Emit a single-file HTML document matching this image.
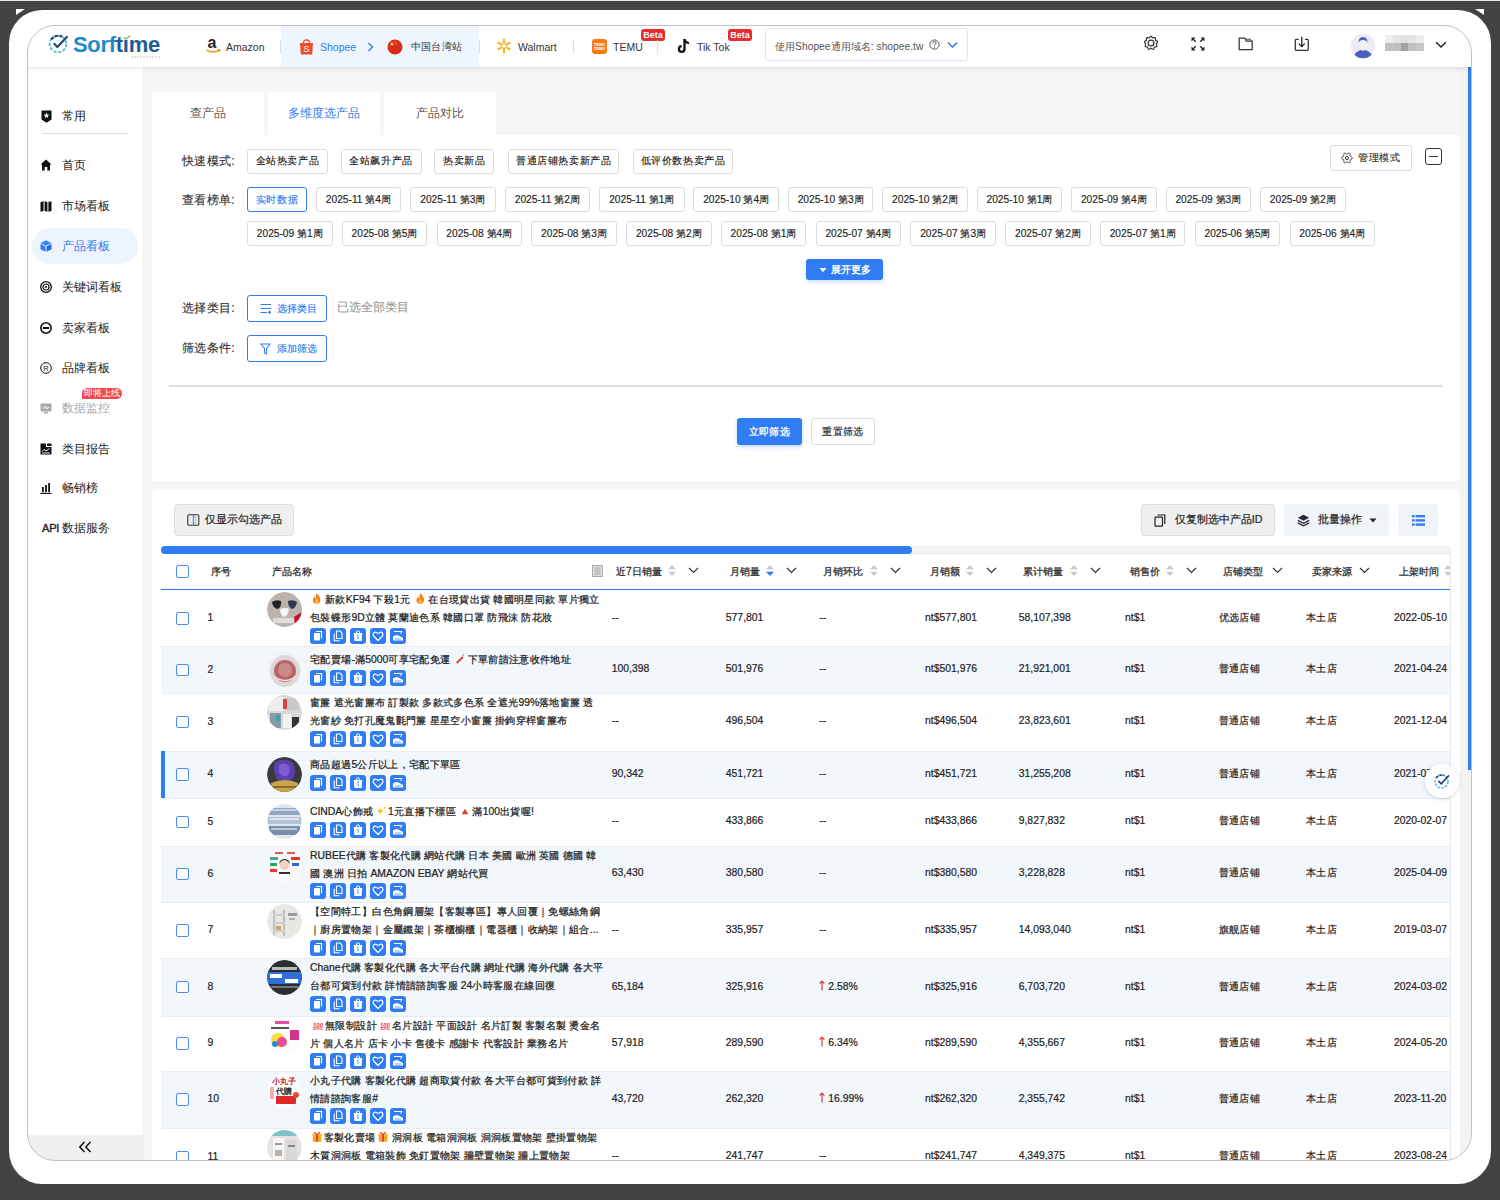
<!DOCTYPE html>
<html><head><meta charset="utf-8">
<style>
*{box-sizing:border-box;margin:0;padding:0}
html,body{width:1500px;height:1200px;overflow:hidden;background:#434343;font-family:"Liberation Sans",sans-serif;color:#333}
.abs{position:absolute}
#topline{position:absolute;left:0;top:0;width:1500px;height:1px;background:#e6e6e6}
#outer{position:absolute;left:9px;top:10px;width:1482px;height:1174px;background:#fff;border-radius:33px}
.tri{position:absolute;width:0;height:0}
#clip{position:absolute;left:0;top:0;width:1500px;height:1200px;clip-path:inset(25px 28px 39px 27px round 28px);background:#f6f6f6}
#frameborder{position:absolute;left:27px;top:25px;width:1445px;height:1136px;border:1px solid #c2c2c2;border-radius:28px;pointer-events:none}
/* header */
#header{position:absolute;left:27px;top:25px;width:1445px;height:42px;background:#fff;z-index:0}
#hshadow{position:absolute;left:27px;top:67px;width:1445px;height:6px;background:linear-gradient(rgba(0,0,0,.09),rgba(0,0,0,.035) 35%,rgba(0,0,0,0));z-index:5}
.nav{position:absolute;top:26px;height:42px;display:flex;align-items:center;font-size:10.5px;color:#333}
.sep{position:absolute;top:40px;width:1px;height:13px;background:#ddd}
.beta{position:absolute;top:29px;width:24px;height:12px;background:#e52b2b;color:#fff;font-size:9px;font-weight:bold;border-radius:3px;text-align:center;line-height:12px}
/* sidebar */
#sidebar{position:absolute;left:27px;top:67px;width:116px;height:1094px;background:#fff;box-shadow:1px 0 0 #f1f1f1}
.sitem{position:absolute;left:40px;height:20px;display:flex;align-items:center;font-size:12px;color:#222}
.sitem .ic{width:12px;height:12px;margin-right:10px;display:flex;align-items:center;justify-content:center}
.sitem span{white-space:nowrap}
/* panels */
.panel{position:absolute;background:#fff}
.tab{position:absolute;top:92px;width:112px;height:43px;background:#fff;border-radius:4px 4px 0 0;font-size:12px;color:#555;text-align:center;line-height:43px}
.lbl{position:absolute;-webkit-text-stroke:0.15px currentColor;font-size:12px;letter-spacing:0.3px;color:#333;white-space:nowrap}
.chip{position:absolute;-webkit-text-stroke:0.15px currentColor;height:25px;border:1px solid #dcdcdc;border-radius:3px;background:#fff;font-size:10.4px;letter-spacing:0.6px;color:#222;display:flex;align-items:center;justify-content:center;white-space:nowrap}
.tbtn{position:absolute;-webkit-text-stroke:0.2px currentColor;border-radius:4px;display:flex;align-items:center;justify-content:center;font-size:10.7px;color:#222;white-space:nowrap}
.cb{position:absolute;width:12.5px;height:12.5px;border:1.3px solid #4b8cf5;border-radius:2px;background:#fff}
.th{position:absolute;top:564px;font-size:10.3px;font-weight:normal;-webkit-text-stroke:0.3px #333;color:#333;white-space:nowrap;line-height:16px}
.td{position:absolute;-webkit-text-stroke:0.2px #222;font-size:10.4px;color:#222;white-space:nowrap;line-height:18px}
.pimg{position:absolute;width:35px;height:35px;border-radius:50%;overflow:hidden}
.pimg svg{display:block}
.pname{position:absolute;-webkit-text-stroke:0.25px #222;font-size:11px;line-height:18.6px;transform:scale(0.942);transform-origin:0 0;color:#222;white-space:nowrap}
.em{display:inline-block;vertical-align:-1px;margin-right:2px}
.icons{position:absolute;display:flex;gap:4px;height:16px}
.icons svg{display:block}
</style></head><body>
<div id="topline"></div>
<div id="outer"></div>
<div class="tri" style="left:16px;top:9px;border-top:6px solid #fff;border-right:9px solid transparent"></div>
<div class="tri" style="left:1475px;top:9px;border-top:6px solid #fff;border-left:9px solid transparent"></div>

<div id="clip">
 <div id="header"></div>
 <!-- logo -->
 <svg class="abs" style="left:48px;top:33px" width="22" height="21" viewBox="0 0 22 21">
  <circle cx="10" cy="11" r="8.3" fill="none" stroke="#5bbde0" stroke-width="2" stroke-dasharray="3.2 1.6"/>
  <path d="M3.2 6.5 A8.3 8.3 0 0 1 14 3.7" fill="none" stroke="#23456f" stroke-width="2.2" stroke-dasharray="3.2 1.6"/>
  <path d="M5.8 10.2 L9.4 14 L19.5 3.2" fill="none" stroke="#23456f" stroke-width="2.1" stroke-linejoin="miter"/>
 </svg>
 <div class="abs" style="left:73px;top:31px;font-size:22px;font-weight:bold;letter-spacing:-0.3px;line-height:28px;white-space:nowrap"><span style="color:#1f8ac6">Sorf</span><span style="color:#1e5d93">tıme</span></div>
 <svg class="abs" style="left:123px;top:35px" width="8" height="5" viewBox="0 0 8 5"><path d="M1 2.5 L3 4 L7 0.8" fill="none" stroke="#6cc04a" stroke-width="1.2"/></svg>
 <div class="abs" style="left:131px;top:56px;width:30px;height:1.5px;background:repeating-linear-gradient(90deg,#bbb 0 2px,transparent 2px 3px);opacity:.45"></div>
 <!-- shopee highlight -->
 <div class="abs" style="left:281px;top:26px;width:198px;height:41px;background:#eef5fe"></div>
 <!-- amazon -->
 <svg class="abs" style="left:205px;top:37px" width="17" height="17" viewBox="0 0 17 17">
  <text x="2.5" y="11" font-family="Liberation Sans" font-weight="bold" font-size="16" fill="#222">a</text>
  <path d="M1.5 13 Q8 17 14.5 13" fill="none" stroke="#f29a1e" stroke-width="1.5"/>
  <path d="M12.5 12.3 L15 12.7 L14.2 15" fill="none" stroke="#f29a1e" stroke-width="1.2"/>
 </svg>
 <div class="nav" style="left:226px">Amazon</div>
 <div class="sep" style="left:280px"></div>
 <svg class="abs" style="left:299px;top:39px" width="15" height="16" viewBox="0 0 15 16">
  <path d="M4.5 4 Q4.5 0.8 7.5 0.8 Q10.5 0.8 10.5 4" fill="none" stroke="#ee4d2d" stroke-width="1.3"/>
  <path d="M1 4 H14 L13.2 15.5 H1.8 Z" fill="#ee4d2d"/>
  <text x="7.5" y="13" text-anchor="middle" font-family="Liberation Sans" font-size="9" fill="#fff">S</text>
 </svg>
 <div class="nav" style="left:320px;color:#2f7cf3">Shopee</div>
 <svg class="abs" style="left:367px;top:42px" width="7" height="10" viewBox="0 0 7 10"><path d="M1.5 1 L5.5 5 L1.5 9" fill="none" stroke="#2f7cf3" stroke-width="1.4"/></svg>
 <svg class="abs" style="left:387px;top:39px" width="16" height="16" viewBox="0 0 16 16"><circle cx="8" cy="8" r="7.5" fill="#dc2b1b"/><circle cx="5" cy="5" r="1.5" fill="#ffd83a"/><circle cx="8" cy="3" r=".5" fill="#ffd83a"/><circle cx="9" cy="5" r=".5" fill="#ffd83a"/></svg>
 <div class="nav" style="left:411px;font-size:10.2px;letter-spacing:0.2px">中国台湾站</div>
 <div class="sep" style="left:479px"></div>
 <svg class="abs" style="left:496px;top:38px" width="16" height="16" viewBox="0 0 16 16"><g stroke="#f5b21a" stroke-width="2" stroke-linecap="round"><path d="M8 1.5 V5.5"/><path d="M8 10.5 V14.5"/><path d="M2.4 4.8 L5.8 6.7"/><path d="M10.2 9.3 L13.6 11.2"/><path d="M2.4 11.2 L5.8 9.3"/><path d="M10.2 6.7 L13.6 4.8"/></g></svg>
 <div class="nav" style="left:518px">Walmart</div>
 <div class="sep" style="left:573px"></div>
 <div class="abs" style="left:592px;top:39px;width:15px;height:15px;background:#f77b13;border-radius:3px;color:#fff;font-size:4px;line-height:4px;text-align:center;padding-top:4px;font-weight:bold">TEMU<br>TEMU</div>
 <div class="nav" style="left:613px;font-size:10.5px">TEMU</div>
 <div class="beta" style="left:641px">Beta</div>
 <div class="sep" style="left:657px"></div>
 <svg class="abs" style="left:676px;top:38px" width="16" height="16" viewBox="0 0 16 16"><path d="M8.5 1 V11 A2.8 2.8 0 1 1 5.7 8.2" fill="none" stroke="#111" stroke-width="2.3"/><path d="M8.5 1.5 Q9.5 5 13 5" fill="none" stroke="#111" stroke-width="2.2"/></svg>
 <div class="nav" style="left:697px;font-size:10.5px">Tik Tok</div>
 <div class="beta" style="left:728px">Beta</div>
 <!-- domain box -->
 <div class="abs" style="left:765px;top:28px;width:203px;height:33px;border:1px solid #dbe7fb;border-radius:3px;background:#fff"></div>
 <div class="nav" style="left:775px;font-size:10.2px;color:#555;letter-spacing:0.05px">使用Shopee通用域名: shopee.tw</div>
 <svg class="abs" style="left:929px;top:39px" width="11" height="11" viewBox="0 0 11 11"><circle cx="5.5" cy="5.5" r="4.6" fill="none" stroke="#555" stroke-width="1"/><path d="M3.8 4.3 Q3.8 2.6 5.5 2.6 Q7.2 2.6 7.2 4.1 Q7.2 5 5.5 5.8 V6.6" fill="none" stroke="#555" stroke-width="1"/><circle cx="5.5" cy="8.2" r=".6" fill="#555"/></svg>
 <svg class="abs" style="left:947px;top:41px" width="11" height="8" viewBox="0 0 11 8"><path d="M1 1.5 L5.5 6 L10 1.5" fill="none" stroke="#2f7cf3" stroke-width="1.5"/></svg>
 <!-- right icons -->
 <svg class="abs" style="left:1143px;top:35px" width="16" height="16" viewBox="0 0 16 16"><path d="M14.00 8.00 L13.70 8.30 L13.44 8.57 L13.29 8.84 L13.26 9.12 L13.35 9.43 L13.52 9.79 L13.70 10.19 L13.83 10.60 L13.86 10.99 L13.76 11.32 L13.52 11.58 L13.16 11.75 L12.74 11.84 L12.31 11.88 L11.92 11.92 L11.60 12.00 L11.37 12.16 L11.22 12.43 L11.11 12.78 L11.00 13.20 L10.86 13.61 L10.65 13.96 L10.38 14.20 L10.05 14.29 L9.67 14.24 L9.29 14.07 L8.92 13.83 L8.59 13.59 L8.28 13.41 L8.00 13.35 L7.72 13.41 L7.41 13.59 L7.08 13.83 L6.71 14.07 L6.33 14.24 L5.95 14.29 L5.62 14.20 L5.35 13.96 L5.14 13.61 L5.00 13.20 L4.89 12.78 L4.78 12.43 L4.63 12.16 L4.40 12.00 L4.08 11.92 L3.69 11.88 L3.26 11.84 L2.84 11.75 L2.48 11.58 L2.24 11.32 L2.14 10.99 L2.17 10.60 L2.30 10.19 L2.48 9.79 L2.65 9.43 L2.74 9.12 L2.71 8.84 L2.56 8.57 L2.30 8.30 L2.00 8.00 L1.71 7.67 L1.51 7.32 L1.44 6.96 L1.53 6.62 L1.76 6.33 L2.10 6.08 L2.49 5.89 L2.87 5.71 L3.17 5.54 L3.37 5.33 L3.45 5.05 L3.45 4.70 L3.42 4.29 L3.39 3.85 L3.43 3.43 L3.57 3.08 L3.82 2.84 L4.16 2.72 L4.57 2.72 L5.00 2.80 L5.41 2.92 L5.77 3.00 L6.08 3.00 L6.34 2.88 L6.57 2.65 L6.79 2.33 L7.05 1.97 L7.33 1.65 L7.66 1.43 L8.00 1.35 L8.34 1.43 L8.67 1.65 L8.95 1.97 L9.21 2.33 L9.43 2.65 L9.66 2.88 L9.92 3.00 L10.23 3.00 L10.59 2.92 L11.00 2.80 L11.43 2.72 L11.84 2.72 L12.18 2.84 L12.43 3.08 L12.57 3.43 L12.61 3.85 L12.58 4.29 L12.55 4.70 L12.55 5.05 L12.63 5.33 L12.83 5.54 L13.13 5.71 L13.51 5.89 L13.90 6.08 L14.24 6.33 L14.47 6.62 L14.56 6.96 L14.49 7.32 L14.29 7.67Z" fill="none" stroke="#333" stroke-width="1.2"/><circle cx="8" cy="8" r="2.9" fill="none" stroke="#333" stroke-width="1.2"/></svg>
 <svg class="abs" style="left:1191px;top:37px" width="14" height="14" viewBox="0 0 14 14"><g fill="#222"><path d="M0.5 0.5 H4.5 L0.5 4.5Z"/><path d="M13.5 0.5 H9.5 L13.5 4.5Z"/><path d="M0.5 13.5 H4.5 L0.5 9.5Z"/><path d="M13.5 13.5 H9.5 L13.5 9.5Z"/></g><g stroke="#222" stroke-width="1.3"><path d="M1.5 1.5 L4.8 4.8"/><path d="M12.5 1.5 L9.2 4.8"/><path d="M1.5 12.5 L4.8 9.2"/><path d="M12.5 12.5 L9.2 9.2"/></g></svg>
 <svg class="abs" style="left:1238px;top:37px" width="16" height="14" viewBox="0 0 16 14"><path d="M1.2 1 H6.8 L8.2 4 H14.2 V12.6 H1.2 Z" fill="none" stroke="#333" stroke-width="1.25" stroke-linejoin="round"/><path d="M7.8 2.2 H12.4 L13.3 4" fill="none" stroke="#444" stroke-width="1"/></svg>
 <svg class="abs" style="left:1294px;top:36px" width="16" height="16" viewBox="0 0 16 16"><path d="M4.6 3.3 H2.3 Q1.3 3.3 1.3 4.3 V13.3 Q1.3 14.3 2.3 14.3 H13.3 Q14.3 14.3 14.3 13.3 V4.3 Q14.3 3.3 13.3 3.3 H11" fill="none" stroke="#333" stroke-width="1.3"/><path d="M7.8 0.8 V10.6 M4.8 7.6 L7.8 10.6 L10.8 7.6" fill="none" stroke="#222" stroke-width="1.3"/></svg>
 <svg class="abs" style="left:1350px;top:33px" width="26" height="26" viewBox="0 0 26 26"><defs><clipPath id="av"><circle cx="13" cy="13" r="12.2"/></clipPath></defs><circle cx="13" cy="13" r="12.2" fill="#ebecf4"/><g clip-path="url(#av)"><path d="M13 16.5 Q5 17.5 3 25 L3 27 H23 V25 Q21 17.5 13 16.5Z" fill="#4a5fbf"/><path d="M10.3 12 V16.8 Q13 18.5 15.7 16.8 V12 Z" fill="#f3eeee"/><ellipse cx="13" cy="10" rx="4" ry="5" fill="#f5efef"/><path d="M8.7 10 Q8.2 4 13 4 Q17.8 4 17.3 10 Q16.8 7 13 7 Q9.2 7 8.7 10Z" fill="#4a5fbf"/></g></svg>
 <div class="abs" style="left:1385px;top:35px;width:39px;height:16px;display:grid;grid-template-columns:repeat(5,1fr);grid-template-rows:1fr 1fr">
  <i style="background:#efefef"></i><i style="background:#e4e4e4"></i><i style="background:#e2e2e2"></i><i style="background:#e4e4e4"></i><i style="background:#ececec"></i>
  <i style="background:#c2c2c2"></i><i style="background:#c0c0c0"></i><i style="background:#a2a2a2"></i><i style="background:#c0c0c0"></i><i style="background:#c6c6c6"></i>
 </div>
 <svg class="abs" style="left:1435px;top:41px" width="12" height="8" viewBox="0 0 12 8"><path d="M1.2 1.2 L6 6 L10.8 1.2" fill="none" stroke="#222" stroke-width="1.5"/></svg>
 <div class="abs" style="left:1468px;top:67px;width:3px;height:703px;background:#2f7cf3"></div>
 <div id="hshadow"></div>
 <div id="sidebar"></div>
 <div class="abs" style="left:32px;top:228px;width:106px;height:36px;border-radius:18px;background:#edf4fe"></div>
 <div class="abs" style="left:42px;top:133px;width:86px;height:1px;background:#dedede"></div>
 <div class="sitem" style="top:106px"><div class="ic"><svg width="11" height="13" viewBox="0 0 11 13"><path d="M0.5 0.5 H10.5 V9.5 L5.5 12.8 L0.5 9.5 Z" fill="#111"/><path d="M5.5 2.6 L6.3 4.6 L8.4 4.7 L6.8 6 L7.3 8.1 L5.5 7 L3.7 8.1 L4.2 6 L2.6 4.7 L4.7 4.6 Z" fill="#fff"/></svg></div><span>常用</span></div>
 <div class="sitem" style="top:155px"><div class="ic"><svg width="12" height="12" viewBox="0 0 12 12"><path d="M6 0.5 L11.5 5.5 H10 V11.5 H7.3 V8 H4.7 V11.5 H2 V5.5 H0.5 Z" fill="#111"/></svg></div><span>首页</span></div>
 <div class="sitem" style="top:196px"><div class="ic"><svg width="12" height="11" viewBox="0 0 12 11"><path d="M0.5 1 L3.6 0.3 V10 L0.5 10.7 Z M4.6 0.3 L7.4 1 V10.7 L4.6 10 Z M8.4 1 L11.5 0.3 V10 L8.4 10.7 Z" fill="#111"/></svg></div><span>市场看板</span></div>
 <div class="sitem" style="top:236px;color:#2f7cf3"><div class="ic"><svg width="12" height="12" viewBox="0 0 12 12"><path d="M6 0.3 L11.4 3 L6 5.7 L0.6 3 Z" fill="#3b86f6"/><path d="M0.5 3.8 L5.5 6.4 V11.8 L0.5 9.2 Z" fill="#2f7cf3"/><path d="M11.5 3.8 L6.5 6.4 V11.8 L11.5 9.2 Z" fill="#1f6ce8"/></svg></div><span>产品看板</span></div>
 <div class="sitem" style="top:277px"><div class="ic"><svg width="12" height="12" viewBox="0 0 12 12"><circle cx="6" cy="6" r="5.3" fill="none" stroke="#111" stroke-width="1.3"/><circle cx="6" cy="6" r="3" fill="none" stroke="#111" stroke-width="1.2"/><circle cx="6" cy="6" r="1" fill="#111"/></svg></div><span>关键词看板</span></div>
 <div class="sitem" style="top:318px"><div class="ic"><svg width="12" height="12" viewBox="0 0 12 12"><circle cx="6" cy="6" r="5.2" fill="none" stroke="#111" stroke-width="1.6"/><rect x="2.8" y="5" width="6.4" height="2" fill="#111"/></svg></div><span>卖家看板</span></div>
 <div class="sitem" style="top:358px"><div class="ic"><svg width="12" height="12" viewBox="0 0 12 12"><circle cx="6" cy="6" r="5.3" fill="none" stroke="#111" stroke-width="1"/><text x="6" y="8.6" text-anchor="middle" font-family="Liberation Sans" font-size="7.5" fill="#111">R</text></svg></div><span>品牌看板</span></div>
 <div class="abs" style="left:82px;top:388px;width:40px;height:11px;border-radius:6px 6px 6px 0;background:#f2494f;color:#fff;font-size:8.5px;line-height:11px;text-align:center;white-space:nowrap">即将上线</div>
 <div class="sitem" style="top:398px;color:#aaa"><div class="ic"><svg width="12" height="11" viewBox="0 0 12 11"><rect x="0.5" y="0.5" width="11" height="8" rx="1" fill="#aaa"/><rect x="4" y="9" width="4" height="1.5" fill="#aaa"/><path d="M2.5 5 H4.5 L5.5 3 L6.8 6.2 L7.6 4.6 H9.5" fill="none" stroke="#fff" stroke-width=".8"/></svg></div><span>数据监控</span></div>
 <div class="sitem" style="top:439px"><div class="ic"><svg width="12" height="12" viewBox="0 0 12 12"><path d="M0.5 0.5 H6 V4 H11.5 V11.5 H0.5 Z" fill="#111"/><rect x="7" y="0.5" width="4.5" height="2.5" fill="#111"/><path d="M2 10 H10 M2.2 8.5 L4 6.5 L6 8 L9.5 5.5" fill="none" stroke="#fff" stroke-width=".9"/></svg></div><span>类目报告</span></div>
 <div class="sitem" style="top:478px"><div class="ic"><svg width="12" height="12" viewBox="0 0 12 12"><rect x="2" y="5" width="1.8" height="5" fill="#111"/><rect x="5.1" y="3" width="1.8" height="7" fill="#111"/><rect x="8.2" y="1" width="1.8" height="9" fill="#111"/><rect x="0.5" y="10.8" width="11" height="1.2" fill="#111"/></svg></div><span>畅销榜</span></div>
 <div class="sitem" style="top:518px;left:42px"><span style="font-size:11px;font-weight:normal;-webkit-text-stroke:0.4px #222;margin-right:3px;letter-spacing:-0.2px">API</span><span>数据服务</span></div>
 <div class="abs" style="left:27px;top:1135px;width:116px;height:26px;background:#f0f0f0"></div>
 <svg class="abs" style="left:78px;top:1141px" width="14" height="12" viewBox="0 0 14 12"><path d="M6.5 1 L1.8 6 L6.5 11 M12.5 1 L7.8 6 L12.5 11" fill="none" stroke="#111" stroke-width="1.5"/></svg>
<div class="panel" style="left:152px;top:135px;width:1308px;height:346px;border-radius:0"></div>
<div class="tab" style="left:152px;color:#555">查产品</div>
<div class="tab" style="left:268px;color:#2f7cf3">多维度选产品</div>
<div class="tab" style="left:384px;color:#555">产品对比</div>
<div class="lbl" style="left:182px;top:153px">快速模式:</div>
<div class="chip" style="left:247.0px;top:148.5px;width:81.0px">全站热卖产品</div>
<div class="chip" style="left:340.5px;top:148.5px;width:81.0px">全站飙升产品</div>
<div class="chip" style="left:434.0px;top:148.5px;width:60.3px">热卖新品</div>
<div class="chip" style="left:508.0px;top:148.5px;width:111.3px">普通店铺热卖新产品</div>
<div class="chip" style="left:632.7px;top:148.5px;width:100.8px">低评价数热卖产品</div>
<div class="lbl" style="left:182px;top:192px">查看榜单:</div>
<div class="chip" style="left:247px;top:187.2px;width:60px;border-color:#2f7cf3;color:#2f7cf3">实时数据</div>
<div class="chip" style="left:315.7px;top:187.2px;width:85.5px;font-size:10.2px;letter-spacing:0">2025-11 第4周</div>
<div class="chip" style="left:410.1px;top:187.2px;width:85.5px;font-size:10.2px;letter-spacing:0">2025-11 第3周</div>
<div class="chip" style="left:504.6px;top:187.2px;width:85.5px;font-size:10.2px;letter-spacing:0">2025-11 第2周</div>
<div class="chip" style="left:599.0px;top:187.2px;width:85.5px;font-size:10.2px;letter-spacing:0">2025-11 第1周</div>
<div class="chip" style="left:693.4px;top:187.2px;width:85.5px;font-size:10.2px;letter-spacing:0">2025-10 第4周</div>
<div class="chip" style="left:787.9px;top:187.2px;width:85.5px;font-size:10.2px;letter-spacing:0">2025-10 第3周</div>
<div class="chip" style="left:882.3px;top:187.2px;width:85.5px;font-size:10.2px;letter-spacing:0">2025-10 第2周</div>
<div class="chip" style="left:976.7px;top:187.2px;width:85.5px;font-size:10.2px;letter-spacing:0">2025-10 第1周</div>
<div class="chip" style="left:1071.1px;top:187.2px;width:85.5px;font-size:10.2px;letter-spacing:0">2025-09 第4周</div>
<div class="chip" style="left:1165.6px;top:187.2px;width:85.5px;font-size:10.2px;letter-spacing:0">2025-09 第3周</div>
<div class="chip" style="left:1260.0px;top:187.2px;width:85.5px;font-size:10.2px;letter-spacing:0">2025-09 第2周</div>
<div class="chip" style="left:247.0px;top:221.2px;width:85.5px;font-size:10.2px;letter-spacing:0">2025-09 第1周</div>
<div class="chip" style="left:341.8px;top:221.2px;width:85.5px;font-size:10.2px;letter-spacing:0">2025-08 第5周</div>
<div class="chip" style="left:436.5px;top:221.2px;width:85.5px;font-size:10.2px;letter-spacing:0">2025-08 第4周</div>
<div class="chip" style="left:531.3px;top:221.2px;width:85.5px;font-size:10.2px;letter-spacing:0">2025-08 第3周</div>
<div class="chip" style="left:626.1px;top:221.2px;width:85.5px;font-size:10.2px;letter-spacing:0">2025-08 第2周</div>
<div class="chip" style="left:720.8px;top:221.2px;width:85.5px;font-size:10.2px;letter-spacing:0">2025-08 第1周</div>
<div class="chip" style="left:815.6px;top:221.2px;width:85.5px;font-size:10.2px;letter-spacing:0">2025-07 第4周</div>
<div class="chip" style="left:910.4px;top:221.2px;width:85.5px;font-size:10.2px;letter-spacing:0">2025-07 第3周</div>
<div class="chip" style="left:1005.2px;top:221.2px;width:85.5px;font-size:10.2px;letter-spacing:0">2025-07 第2周</div>
<div class="chip" style="left:1099.9px;top:221.2px;width:85.5px;font-size:10.2px;letter-spacing:0">2025-07 第1周</div>
<div class="chip" style="left:1194.7px;top:221.2px;width:85.5px;font-size:10.2px;letter-spacing:0">2025-06 第5周</div>
<div class="chip" style="left:1289.5px;top:221.2px;width:85.5px;font-size:10.2px;letter-spacing:0">2025-06 第4周</div>
<div class="chip" style="left:1330px;top:144.6px;width:82px;height:26px;color:#333"><svg width="12" height="12" viewBox="0 0 12 12" style="margin-right:5px"><path d="M11.40 6.00 L11.35 6.28 L11.22 6.55 L11.01 6.79 L10.74 7.01 L10.44 7.19 L10.14 7.35 L9.86 7.48 L9.61 7.61 L9.42 7.74 L9.29 7.90 L9.22 8.09 L9.20 8.32 L9.21 8.60 L9.23 8.91 L9.25 9.25 L9.24 9.60 L9.19 9.94 L9.08 10.25 L8.92 10.50 L8.70 10.68 L8.43 10.78 L8.13 10.79 L7.82 10.73 L7.50 10.61 L7.19 10.44 L6.90 10.26 L6.65 10.08 L6.41 9.93 L6.20 9.83 L6.00 9.80 L5.80 9.83 L5.59 9.93 L5.35 10.08 L5.10 10.26 L4.81 10.44 L4.50 10.61 L4.18 10.73 L3.87 10.79 L3.57 10.78 L3.30 10.68 L3.08 10.50 L2.92 10.25 L2.81 9.94 L2.76 9.60 L2.75 9.25 L2.77 8.91 L2.79 8.60 L2.80 8.32 L2.78 8.09 L2.71 7.90 L2.58 7.74 L2.39 7.61 L2.14 7.48 L1.86 7.35 L1.56 7.19 L1.26 7.01 L0.99 6.79 L0.78 6.55 L0.65 6.28 L0.60 6.00 L0.65 5.72 L0.78 5.45 L0.99 5.21 L1.26 4.99 L1.56 4.81 L1.86 4.65 L2.14 4.52 L2.39 4.39 L2.58 4.26 L2.71 4.10 L2.78 3.91 L2.80 3.68 L2.79 3.40 L2.77 3.09 L2.75 2.75 L2.76 2.40 L2.81 2.06 L2.92 1.75 L3.08 1.50 L3.30 1.32 L3.57 1.22 L3.87 1.21 L4.18 1.27 L4.50 1.39 L4.81 1.56 L5.10 1.74 L5.35 1.92 L5.59 2.07 L5.80 2.17 L6.00 2.20 L6.20 2.17 L6.41 2.07 L6.65 1.92 L6.90 1.74 L7.19 1.56 L7.50 1.39 L7.82 1.27 L8.13 1.21 L8.43 1.22 L8.70 1.32 L8.92 1.50 L9.08 1.75 L9.19 2.06 L9.24 2.40 L9.25 2.75 L9.23 3.09 L9.21 3.40 L9.20 3.68 L9.22 3.91 L9.29 4.10 L9.42 4.26 L9.61 4.39 L9.86 4.52 L10.14 4.65 L10.44 4.81 L10.74 4.99 L11.01 5.21 L11.22 5.45 L11.35 5.72Z" fill="none" stroke="#333" stroke-width="1"/><circle cx="6" cy="6" r="1.6" fill="none" stroke="#333" stroke-width="1"/></svg>管理模式</div>
<div class="abs" style="left:1425px;top:148px;width:17px;height:17px;border:1.3px solid #333;border-radius:3px"><div class="abs" style="left:3px;top:6.5px;width:8.5px;height:1.3px;background:#333"></div></div>
<div class="abs" style="left:806px;top:259px;width:77px;height:21px;background:#2f7cf3;border-radius:3px;box-shadow:0 2px 4px rgba(47,124,243,.25);color:#fff;font-size:10px;font-weight:bold;display:flex;align-items:center;justify-content:center"><svg width="8" height="6" viewBox="0 0 8 6" style="margin-right:4px"><path d="M0.5 1 H7.5 L4 5.2 Z" fill="#fff"/></svg>展开更多</div>
<div class="lbl" style="left:182px;top:299.5px">选择类目:</div>
<div class="chip" style="left:247px;top:295px;width:80px;height:27px;border-color:#2f7cf3;color:#2f7cf3;font-size:10.4px;letter-spacing:0;padding-left:2px"><svg width="12" height="11" viewBox="0 0 12 11" style="margin-right:5px"><path d="M0.5 1.5 H11 M0.5 5.5 H11 M0.5 9.5 H7" fill="none" stroke="#2f7cf3" stroke-width="1.1"/><path d="M9.5 7.5 V11 M7.8 9.3 H11.2" fill="none" stroke="#2f7cf3" stroke-width="1.1"/></svg>选择类目</div>
<div class="lbl" style="left:336.5px;top:300px;color:#999;font-size:11.5px;letter-spacing:0">已选全部类目</div>
<div class="lbl" style="left:182px;top:340px">筛选条件:</div>
<div class="chip" style="left:247px;top:335px;width:80px;height:27px;border-color:#2f7cf3;color:#2f7cf3;font-size:10.4px;letter-spacing:0;padding-left:2px"><svg width="11" height="12" viewBox="0 0 11 12" style="margin-right:6px"><path d="M0.8 1 H10.2 L6.5 5.5 V11 L4.5 9.8 V5.5 Z" fill="none" stroke="#2f7cf3" stroke-width="1.1" stroke-linejoin="round"/></svg>添加筛选</div>
<div class="abs" style="left:169px;top:385px;width:1274px;height:1.5px;background:#dedede"></div>
<div class="abs" style="left:737px;top:418px;width:65px;height:27px;background:#2f7cf3;border-radius:3px;box-shadow:0 2px 4px rgba(47,124,243,.3);color:#fff;font-size:10.4px;letter-spacing:0.3px;-webkit-text-stroke:0.3px #fff;display:flex;align-items:center;justify-content:center">立即筛选</div>
<div class="chip" style="left:811px;top:418px;width:64px;height:27px;font-size:10.4px;letter-spacing:0.3px;color:#222">重置筛选</div>
<div class="panel" style="left:152px;top:489px;width:1308px;height:700px;border-radius:6px 6px 0 0"></div>
<div class="tbtn" style="left:174px;top:504px;width:120px;height:32px;background:#efefef;border:1px solid #dcdcdc"><svg width="13" height="12" viewBox="0 0 13 12" style="margin-right:5px"><rect x="0.8" y="0.8" width="11" height="10.4" rx="1" fill="none" stroke="#333" stroke-width="1.1"/><path d="M6.3 0.5 V11.5" stroke="#2f7cf3" stroke-width="1"/><path d="M8 3 H10 M8 6 H10 M8 9 H10" stroke="#333" stroke-width=".8" stroke-dasharray="1 1"/></svg>仅显示勾选产品</div>
<div class="tbtn" style="left:1141px;top:504px;width:134px;height:32px;background:#efefef;border:1px solid #dcdcdc"><svg width="12" height="13" viewBox="0 0 12 13" style="margin-right:9px"><path d="M3.5 1 H10.8 V10" fill="none" stroke="#222" stroke-width="1.2"/><rect x="1" y="3.2" width="7.5" height="9" rx=".8" fill="none" stroke="#222" stroke-width="1.2"/></svg>仅复制选中产品ID</div>
<div class="tbtn" style="left:1284px;top:504px;width:105px;height:32px;background:#f0f3f7"><svg width="13" height="13" viewBox="0 0 13 13" style="margin-right:8px"><path d="M6.5 0.8 L12.2 3.8 L6.5 6.8 L0.8 3.8Z" fill="#1f2d3d"/><path d="M0.8 6.3 L6.5 9.3 L12.2 6.3" fill="none" stroke="#1f2d3d" stroke-width="1.3"/><path d="M0.8 8.8 L6.5 11.8 L12.2 8.8" fill="none" stroke="#1f2d3d" stroke-width="1.3"/></svg>批量操作<svg width="8" height="5" viewBox="0 0 8 5" style="margin-left:7px"><path d="M0.5 0.5 H7.5 L4 4.5Z" fill="#222"/></svg></div>
<div class="tbtn" style="left:1398px;top:504px;width:40px;height:32px;background:#f0f3f7"><svg width="13" height="11" viewBox="0 0 13 11"><g fill="#2f7cf3"><rect x="0" y="0" width="2.6" height="2.4"/><rect x="3.6" y="0" width="9.4" height="2.4"/><rect x="0" y="4.2" width="2.6" height="2.4"/><rect x="3.6" y="4.2" width="9.4" height="2.4"/><rect x="0" y="8.4" width="2.6" height="2.4"/><rect x="3.6" y="8.4" width="9.4" height="2.4"/></g></svg></div>
<div class="abs" style="left:161px;top:545.5px;width:1290px;height:8px;background:#f3f3f3;border-bottom:1px solid #e2e5e9"></div>
<div class="abs" style="left:161px;top:545.5px;width:751px;height:8px;background:#2f7cf3;border-radius:4px"></div>
<div class="abs" style="left:160.5px;top:553.5px;width:1px;height:640px;background:#e3e6ea"></div>
<div class="abs" style="left:161px;top:553.5px;width:1290px;height:35px;background:#fff"></div>
<div class="cb" style="left:176px;top:565px"></div>
<div class="th" style="left:211px">序号</div>
<div class="th" style="left:271.5px">产品名称</div>
<svg class="abs" style="left:592px;top:565px" width="11" height="12" viewBox="0 0 11 12"><rect x=".5" y=".5" width="10" height="11" fill="#ddd" stroke="#aaa"/><path d="M2.5 3 H8.5 M2.5 5 H8.5 M2.5 7 H8.5 M2.5 9 H8.5" stroke="#999" stroke-width=".8"/></svg>
<div class="th" style="left:616px">近7日销量</div>
<svg class="abs" style="left:667.0px;top:564px" width="10" height="13" viewBox="0 0 10 13"><path d="M5 1 L9 5.2 H1Z" fill="#c4c9d2"/><path d="M5 12 L9 7.8 H1Z" fill="#c4c9d2"/></svg>
<svg class="abs" style="left:688.0px;top:567px" width="11" height="7" viewBox="0 0 11 7"><path d="M1 1 L5.5 5.5 L10 1" fill="none" stroke="#333" stroke-width="1.2"/></svg>
<div class="th" style="left:730px">月销量</div>
<svg class="abs" style="left:765.3px;top:564px" width="10" height="13" viewBox="0 0 10 13"><path d="M5 1 L9 5.2 H1Z" fill="#c4c9d2"/><path d="M5 12 L9 7.8 H1Z" fill="#2f7cf3"/></svg>
<svg class="abs" style="left:786.3px;top:567px" width="11" height="7" viewBox="0 0 11 7"><path d="M1 1 L5.5 5.5 L10 1" fill="none" stroke="#333" stroke-width="1.2"/></svg>
<div class="th" style="left:823.3px">月销环比</div>
<svg class="abs" style="left:868.7px;top:564px" width="10" height="13" viewBox="0 0 10 13"><path d="M5 1 L9 5.2 H1Z" fill="#c4c9d2"/><path d="M5 12 L9 7.8 H1Z" fill="#c4c9d2"/></svg>
<svg class="abs" style="left:889.7px;top:567px" width="11" height="7" viewBox="0 0 11 7"><path d="M1 1 L5.5 5.5 L10 1" fill="none" stroke="#333" stroke-width="1.2"/></svg>
<div class="th" style="left:930px">月销额</div>
<svg class="abs" style="left:965.3px;top:564px" width="10" height="13" viewBox="0 0 10 13"><path d="M5 1 L9 5.2 H1Z" fill="#c4c9d2"/><path d="M5 12 L9 7.8 H1Z" fill="#c4c9d2"/></svg>
<svg class="abs" style="left:986.3px;top:567px" width="11" height="7" viewBox="0 0 11 7"><path d="M1 1 L5.5 5.5 L10 1" fill="none" stroke="#333" stroke-width="1.2"/></svg>
<div class="th" style="left:1023.3px">累计销量</div>
<svg class="abs" style="left:1068.7px;top:564px" width="10" height="13" viewBox="0 0 10 13"><path d="M5 1 L9 5.2 H1Z" fill="#c4c9d2"/><path d="M5 12 L9 7.8 H1Z" fill="#c4c9d2"/></svg>
<svg class="abs" style="left:1089.7px;top:567px" width="11" height="7" viewBox="0 0 11 7"><path d="M1 1 L5.5 5.5 L10 1" fill="none" stroke="#333" stroke-width="1.2"/></svg>
<div class="th" style="left:1130px">销售价</div>
<svg class="abs" style="left:1164.8px;top:564px" width="10" height="13" viewBox="0 0 10 13"><path d="M5 1 L9 5.2 H1Z" fill="#c4c9d2"/><path d="M5 12 L9 7.8 H1Z" fill="#c4c9d2"/></svg>
<svg class="abs" style="left:1185.8px;top:567px" width="11" height="7" viewBox="0 0 11 7"><path d="M1 1 L5.5 5.5 L10 1" fill="none" stroke="#333" stroke-width="1.2"/></svg>
<div class="th" style="left:1223.4px">店铺类型</div>
<svg class="abs" style="left:1272.4px;top:567px" width="11" height="7" viewBox="0 0 11 7"><path d="M1 1 L5.5 5.5 L10 1" fill="none" stroke="#333" stroke-width="1.2"/></svg>
<div class="th" style="left:1311.5px">卖家来源</div>
<svg class="abs" style="left:1359.0px;top:567px" width="11" height="7" viewBox="0 0 11 7"><path d="M1 1 L5.5 5.5 L10 1" fill="none" stroke="#333" stroke-width="1.2"/></svg>
<div class="th" style="left:1399px">上架时间</div>
<svg class="abs" style="left:1442.5px;top:564px" width="10" height="13" viewBox="0 0 10 13"><path d="M5 1 L9 5.2 H1Z" fill="#c4c9d2"/><path d="M5 12 L9 7.8 H1Z" fill="#c4c9d2"/></svg>
<div class="abs" style="left:161px;top:588.5px;width:1290px;height:2px;background:#2f7cf3"></div>
<div class="abs" style="left:161px;top:590px;width:1290px;height:56px;background:#fff;border-top:1px solid #fff"></div>
<div class="cb" style="left:176px;top:612.00px"></div>
<div class="td" style="left:207.5px;top:609.00px">1</div>
<div class="pimg" style="left:267px;top:592px"><svg width="35" height="35" viewBox="0 0 35 35"><defs><clipPath id="pc0"><circle cx="17.5" cy="17.5" r="17.5"/></clipPath></defs><g clip-path="url(#pc0)"><rect width="35" height="35" fill="#bcb4ac"/><path d="M5 10 Q9 7 14 9 Q15 14 11 17 Q6 17 5 10Z" fill="#222"/><path d="M21 9 Q26 7 30 10 Q29 16 25 17 Q21 15 21 9Z" fill="#2e3a52"/><path d="M13 17 Q18 15 22 17 Q21 24 17 25 Q13 23 13 17Z" fill="#f4f4f4"/><rect x="6" y="26" width="23" height="5" fill="#ddd"/><path d="M27 25 L35 20 V35 H28Z" fill="#c8102e"/></g></svg></div>
<div class="pname" style="left:310px;top:591px"><svg class="em" style="margin:0 4px 0 2px" width="10" height="12" viewBox="0 0 10 12"><path d="M5 0.5 Q9.5 4.5 9 8 Q8.6 11.5 5 11.5 Q1.4 11.5 1 8 Q0.8 5.5 3 3.8 Q3 5.8 4.2 6.3 Q3.8 3 5 0.5Z" fill="#f6821f"/><path d="M5 6 Q7.2 8 6.8 9.5 Q6.4 11 5 11 Q3.6 11 3.3 9.6 Q3.2 8.4 5 6Z" fill="#fbc02d"/></svg>新款KF94 下殺1元 <svg class="em" style="margin:0 4px 0 2px" width="10" height="12" viewBox="0 0 10 12"><path d="M5 0.5 Q9.5 4.5 9 8 Q8.6 11.5 5 11.5 Q1.4 11.5 1 8 Q0.8 5.5 3 3.8 Q3 5.8 4.2 6.3 Q3.8 3 5 0.5Z" fill="#f6821f"/><path d="M5 6 Q7.2 8 6.8 9.5 Q6.4 11 5 11 Q3.6 11 3.3 9.6 Q3.2 8.4 5 6Z" fill="#fbc02d"/></svg>在台現貨出貨 韓國明星同款 單片獨立<br>包裝蝶形9D立體 莫蘭迪色系 韓國口罩 防飛沫 防花妝</div>
<div class="icons" style="left:310px;top:627.50px"><svg width="16" height="16" viewBox="0 0 16 16"><rect width="16" height="16" rx="3.2" fill="#2f7cf3"/><path d="M6.2 3.5 H11.5 V10.5" fill="none" stroke="#fff" stroke-width="1.2"/><rect x="4" y="5" width="6" height="7.5" rx=".6" fill="#fff"/></svg><svg width="16" height="16" viewBox="0 0 16 16"><rect width="16" height="16" rx="3.2" fill="#2f7cf3"/><path d="M6.5 3 H10 L12 5 V10.5 H6.5Z" fill="none" stroke="#fff" stroke-width="1.1"/><path d="M4.2 5.5 V12.8 H9.5" fill="none" stroke="#fff" stroke-width="1.1"/></svg><svg width="16" height="16" viewBox="0 0 16 16"><rect width="16" height="16" rx="3.2" fill="#2f7cf3"/><path d="M6.3 5 Q6.3 2.8 8 2.8 Q9.7 2.8 9.7 5" fill="none" stroke="#fff" stroke-width="1"/><path d="M3.8 5 H12.2 L11.6 13 H4.4Z" fill="#fff"/><path d="M9 7.2 Q8 6.7 7.2 7.3 Q6.8 8 8 8.6 Q9.2 9.2 8.8 10 Q8 10.6 6.9 10" fill="none" stroke="#2f7cf3" stroke-width=".7"/></svg><svg width="16" height="16" viewBox="0 0 16 16"><rect width="16" height="16" rx="3.2" fill="#2f7cf3"/><path d="M8 12.5 L3.6 8 Q2.4 6.4 3.6 4.8 Q5.4 3.2 8 5.6 Q10.6 3.2 12.4 4.8 Q13.6 6.4 12.4 8 Z" fill="none" stroke="#fff" stroke-width="1.2" stroke-linejoin="round"/></svg><svg width="16" height="16" viewBox="0 0 16 16"><rect width="16" height="16" rx="3.2" fill="#2f7cf3"/><path d="M4 3.5 H12 L10.5 6" fill="none" stroke="#fff" stroke-width="1"/><path d="M3 8.5 Q6 6 8.5 7.5 L13 10 V12.5 H3Z" fill="#fff"/><path d="M5 11 H11" stroke="#2f7cf3" stroke-width=".7"/></svg></div>
<div class="td" style="left:611.7px;top:608.70px;">--</div>
<div class="td" style="left:725.8px;top:608.70px;">577,801</div>
<div class="td" style="left:819.3px;top:608.70px;">--</div>
<div class="td" style="left:925px;top:608.70px;">nt$577,801</div>
<div class="td" style="left:1018.7px;top:608.70px;">58,107,398</div>
<div class="td" style="left:1125px;top:608.70px;">nt$1</div>
<div class="td" style="left:1218.9px;top:608.70px; font-size:10.4px;letter-spacing:0.25px;">优选店铺</div>
<div class="td" style="left:1306px;top:608.70px; font-size:10.4px;letter-spacing:0.25px;">本土店</div>
<div class="td" style="left:1394px;top:608.70px;">2022-05-10</div>
<div class="abs" style="left:161px;top:646px;width:1290px;height:47px;background:#f2f7fc;border-top:1px solid #e8edf1"></div>
<div class="cb" style="left:176px;top:663.50px"></div>
<div class="td" style="left:207.5px;top:660.50px">2</div>
<div class="pimg" style="left:267px;top:652px"><svg width="35" height="35" viewBox="0 0 35 35"><defs><clipPath id="pc1"><circle cx="17.5" cy="17.5" r="17.5"/></clipPath></defs><g clip-path="url(#pc1)"><rect width="35" height="35" fill="#eef2f6"/><ellipse cx="18" cy="19" rx="15" ry="16" fill="#ddd8d6"/><circle cx="18" cy="19" r="11" fill="#b8656a"/><circle cx="18" cy="18" r="7" fill="#c98a8a"/><path d="M7 24 Q18 33 29 24" stroke="#f3e3e3" stroke-width="1.5" fill="none"/></g></svg></div>
<div class="pname" style="left:310px;top:651px">宅配賣場-滿5000可享宅配免運 <svg class="em" style="margin:0 2px 0 1px" width="12" height="12" viewBox="0 0 12 12"><path d="M2 10 L8.5 3.5 L10 5 L3.5 11.5Z" fill="#e53935"/><path d="M8.8 3.2 L10.5 1.5" stroke="#333" stroke-width=".8"/></svg>下單前請注意收件地址</div>
<div class="icons" style="left:310px;top:670.00px"><svg width="16" height="16" viewBox="0 0 16 16"><rect width="16" height="16" rx="3.2" fill="#2f7cf3"/><path d="M6.2 3.5 H11.5 V10.5" fill="none" stroke="#fff" stroke-width="1.2"/><rect x="4" y="5" width="6" height="7.5" rx=".6" fill="#fff"/></svg><svg width="16" height="16" viewBox="0 0 16 16"><rect width="16" height="16" rx="3.2" fill="#2f7cf3"/><path d="M6.5 3 H10 L12 5 V10.5 H6.5Z" fill="none" stroke="#fff" stroke-width="1.1"/><path d="M4.2 5.5 V12.8 H9.5" fill="none" stroke="#fff" stroke-width="1.1"/></svg><svg width="16" height="16" viewBox="0 0 16 16"><rect width="16" height="16" rx="3.2" fill="#2f7cf3"/><path d="M6.3 5 Q6.3 2.8 8 2.8 Q9.7 2.8 9.7 5" fill="none" stroke="#fff" stroke-width="1"/><path d="M3.8 5 H12.2 L11.6 13 H4.4Z" fill="#fff"/><path d="M9 7.2 Q8 6.7 7.2 7.3 Q6.8 8 8 8.6 Q9.2 9.2 8.8 10 Q8 10.6 6.9 10" fill="none" stroke="#2f7cf3" stroke-width=".7"/></svg><svg width="16" height="16" viewBox="0 0 16 16"><rect width="16" height="16" rx="3.2" fill="#2f7cf3"/><path d="M8 12.5 L3.6 8 Q2.4 6.4 3.6 4.8 Q5.4 3.2 8 5.6 Q10.6 3.2 12.4 4.8 Q13.6 6.4 12.4 8 Z" fill="none" stroke="#fff" stroke-width="1.2" stroke-linejoin="round"/></svg><svg width="16" height="16" viewBox="0 0 16 16"><rect width="16" height="16" rx="3.2" fill="#2f7cf3"/><path d="M4 3.5 H12 L10.5 6" fill="none" stroke="#fff" stroke-width="1"/><path d="M3 8.5 Q6 6 8.5 7.5 L13 10 V12.5 H3Z" fill="#fff"/><path d="M5 11 H11" stroke="#2f7cf3" stroke-width=".7"/></svg></div>
<div class="td" style="left:611.7px;top:660.20px;">100,398</div>
<div class="td" style="left:725.8px;top:660.20px;">501,976</div>
<div class="td" style="left:819.3px;top:660.20px;">--</div>
<div class="td" style="left:925px;top:660.20px;">nt$501,976</div>
<div class="td" style="left:1018.7px;top:660.20px;">21,921,001</div>
<div class="td" style="left:1125px;top:660.20px;">nt$1</div>
<div class="td" style="left:1218.9px;top:660.20px; font-size:10.4px;letter-spacing:0.25px;">普通店铺</div>
<div class="td" style="left:1306px;top:660.20px; font-size:10.4px;letter-spacing:0.25px;">本土店</div>
<div class="td" style="left:1394px;top:660.20px;">2021-04-24</div>
<div class="abs" style="left:161px;top:693px;width:1290px;height:57.5px;background:#fff;border-top:1px solid #e8edf1"></div>
<div class="cb" style="left:176px;top:715.75px"></div>
<div class="td" style="left:207.5px;top:712.75px">3</div>
<div class="pimg" style="left:267px;top:695px"><svg width="35" height="35" viewBox="0 0 35 35"><defs><clipPath id="pc2"><circle cx="17.5" cy="17.5" r="17.5"/></clipPath></defs><g clip-path="url(#pc2)"><rect width="35" height="35" fill="#d9d9d9"/><rect x="2" y="2" width="14" height="14" fill="#eee"/><rect x="18" y="3" width="14" height="12" fill="#c9c9c9"/><rect x="16" y="4" width="4" height="10" fill="#d44"/><rect x="3" y="18" width="11" height="15" fill="#8a9aa6"/><rect x="16" y="19" width="8" height="14" fill="#f2f2f2"/><rect x="25" y="22" width="7" height="11" fill="#333"/><rect x="9" y="20" width="4" height="6" fill="#3aa"/></g></svg></div>
<div class="pname" style="left:310px;top:694px">窗簾 遮光窗簾布 訂製款 多款式多色系 全遮光99%落地窗簾 透<br>光窗紗 免打孔魔鬼氈門簾 星星空小窗簾 掛鉤穿桿窗簾布</div>
<div class="icons" style="left:310px;top:730.50px"><svg width="16" height="16" viewBox="0 0 16 16"><rect width="16" height="16" rx="3.2" fill="#2f7cf3"/><path d="M6.2 3.5 H11.5 V10.5" fill="none" stroke="#fff" stroke-width="1.2"/><rect x="4" y="5" width="6" height="7.5" rx=".6" fill="#fff"/></svg><svg width="16" height="16" viewBox="0 0 16 16"><rect width="16" height="16" rx="3.2" fill="#2f7cf3"/><path d="M6.5 3 H10 L12 5 V10.5 H6.5Z" fill="none" stroke="#fff" stroke-width="1.1"/><path d="M4.2 5.5 V12.8 H9.5" fill="none" stroke="#fff" stroke-width="1.1"/></svg><svg width="16" height="16" viewBox="0 0 16 16"><rect width="16" height="16" rx="3.2" fill="#2f7cf3"/><path d="M6.3 5 Q6.3 2.8 8 2.8 Q9.7 2.8 9.7 5" fill="none" stroke="#fff" stroke-width="1"/><path d="M3.8 5 H12.2 L11.6 13 H4.4Z" fill="#fff"/><path d="M9 7.2 Q8 6.7 7.2 7.3 Q6.8 8 8 8.6 Q9.2 9.2 8.8 10 Q8 10.6 6.9 10" fill="none" stroke="#2f7cf3" stroke-width=".7"/></svg><svg width="16" height="16" viewBox="0 0 16 16"><rect width="16" height="16" rx="3.2" fill="#2f7cf3"/><path d="M8 12.5 L3.6 8 Q2.4 6.4 3.6 4.8 Q5.4 3.2 8 5.6 Q10.6 3.2 12.4 4.8 Q13.6 6.4 12.4 8 Z" fill="none" stroke="#fff" stroke-width="1.2" stroke-linejoin="round"/></svg><svg width="16" height="16" viewBox="0 0 16 16"><rect width="16" height="16" rx="3.2" fill="#2f7cf3"/><path d="M4 3.5 H12 L10.5 6" fill="none" stroke="#fff" stroke-width="1"/><path d="M3 8.5 Q6 6 8.5 7.5 L13 10 V12.5 H3Z" fill="#fff"/><path d="M5 11 H11" stroke="#2f7cf3" stroke-width=".7"/></svg></div>
<div class="td" style="left:611.7px;top:712.45px;">--</div>
<div class="td" style="left:725.8px;top:712.45px;">496,504</div>
<div class="td" style="left:819.3px;top:712.45px;">--</div>
<div class="td" style="left:925px;top:712.45px;">nt$496,504</div>
<div class="td" style="left:1018.7px;top:712.45px;">23,823,601</div>
<div class="td" style="left:1125px;top:712.45px;">nt$1</div>
<div class="td" style="left:1218.9px;top:712.45px; font-size:10.4px;letter-spacing:0.25px;">普通店铺</div>
<div class="td" style="left:1306px;top:712.45px; font-size:10.4px;letter-spacing:0.25px;">本土店</div>
<div class="td" style="left:1394px;top:712.45px;">2021-12-04</div>
<div class="abs" style="left:161px;top:750.5px;width:1290px;height:47.0px;background:#f2f7fc;border-top:1px solid #e8edf1"></div>
<div class="abs" style="left:161px;top:750.5px;width:3.5px;height:47.0px;background:#2f7cf3"></div>
<div class="cb" style="left:176px;top:768.00px"></div>
<div class="td" style="left:207.5px;top:765.00px">4</div>
<div class="pimg" style="left:267px;top:756.5px"><svg width="35" height="35" viewBox="0 0 35 35"><defs><clipPath id="pc3"><circle cx="17.5" cy="17.5" r="17.5"/></clipPath></defs><g clip-path="url(#pc3)"><rect width="35" height="35" fill="#3a3a3a"/><path d="M8 5 Q18 0 26 6 Q30 14 26 22 Q18 26 10 22 Q5 14 8 5Z" fill="#5b3fb0"/><path d="M12 8 Q18 5 22 9 Q24 15 20 19 Q15 20 12 16Z" fill="#7c5ed0"/><path d="M4 26 Q18 20 31 26 L30 35 H5Z" fill="#c8a54a"/><rect x="4" y="29" width="27" height="2" fill="#8a6a2a"/></g></svg></div>
<div class="pname" style="left:310px;top:755.5px">商品超過5公斤以上，宅配下單區</div>
<div class="icons" style="left:310px;top:774.50px"><svg width="16" height="16" viewBox="0 0 16 16"><rect width="16" height="16" rx="3.2" fill="#2f7cf3"/><path d="M6.2 3.5 H11.5 V10.5" fill="none" stroke="#fff" stroke-width="1.2"/><rect x="4" y="5" width="6" height="7.5" rx=".6" fill="#fff"/></svg><svg width="16" height="16" viewBox="0 0 16 16"><rect width="16" height="16" rx="3.2" fill="#2f7cf3"/><path d="M6.5 3 H10 L12 5 V10.5 H6.5Z" fill="none" stroke="#fff" stroke-width="1.1"/><path d="M4.2 5.5 V12.8 H9.5" fill="none" stroke="#fff" stroke-width="1.1"/></svg><svg width="16" height="16" viewBox="0 0 16 16"><rect width="16" height="16" rx="3.2" fill="#2f7cf3"/><path d="M6.3 5 Q6.3 2.8 8 2.8 Q9.7 2.8 9.7 5" fill="none" stroke="#fff" stroke-width="1"/><path d="M3.8 5 H12.2 L11.6 13 H4.4Z" fill="#fff"/><path d="M9 7.2 Q8 6.7 7.2 7.3 Q6.8 8 8 8.6 Q9.2 9.2 8.8 10 Q8 10.6 6.9 10" fill="none" stroke="#2f7cf3" stroke-width=".7"/></svg><svg width="16" height="16" viewBox="0 0 16 16"><rect width="16" height="16" rx="3.2" fill="#2f7cf3"/><path d="M8 12.5 L3.6 8 Q2.4 6.4 3.6 4.8 Q5.4 3.2 8 5.6 Q10.6 3.2 12.4 4.8 Q13.6 6.4 12.4 8 Z" fill="none" stroke="#fff" stroke-width="1.2" stroke-linejoin="round"/></svg><svg width="16" height="16" viewBox="0 0 16 16"><rect width="16" height="16" rx="3.2" fill="#2f7cf3"/><path d="M4 3.5 H12 L10.5 6" fill="none" stroke="#fff" stroke-width="1"/><path d="M3 8.5 Q6 6 8.5 7.5 L13 10 V12.5 H3Z" fill="#fff"/><path d="M5 11 H11" stroke="#2f7cf3" stroke-width=".7"/></svg></div>
<div class="td" style="left:611.7px;top:764.70px;">90,342</div>
<div class="td" style="left:725.8px;top:764.70px;">451,721</div>
<div class="td" style="left:819.3px;top:764.70px;">--</div>
<div class="td" style="left:925px;top:764.70px;">nt$451,721</div>
<div class="td" style="left:1018.7px;top:764.70px;">31,255,208</div>
<div class="td" style="left:1125px;top:764.70px;">nt$1</div>
<div class="td" style="left:1218.9px;top:764.70px; font-size:10.4px;letter-spacing:0.25px;">普通店铺</div>
<div class="td" style="left:1306px;top:764.70px; font-size:10.4px;letter-spacing:0.25px;">本土店</div>
<div class="td" style="left:1394px;top:764.70px;">2021-07-26</div>
<div class="abs" style="left:161px;top:797.5px;width:1290px;height:48.0px;background:#fff;border-top:1px solid #e8edf1"></div>
<div class="cb" style="left:176px;top:815.50px"></div>
<div class="td" style="left:207.5px;top:812.50px">5</div>
<div class="pimg" style="left:267px;top:803.5px"><svg width="35" height="35" viewBox="0 0 35 35"><defs><clipPath id="pc4"><circle cx="17.5" cy="17.5" r="17.5"/></clipPath></defs><g clip-path="url(#pc4)"><rect width="35" height="35" fill="#dfe6ee"/><rect x="2" y="4" width="31" height="7" fill="#8fa6c4"/><rect x="1" y="13" width="33" height="7" fill="#b4c4d8"/><rect x="2" y="22" width="31" height="9" fill="#7a8fae"/><path d="M4 6 H30 M3 15 H32 M4 25 H30" stroke="#fff" stroke-width="1.2"/></g></svg></div>
<div class="pname" style="left:310px;top:802.5px">CINDA心飾戒<svg class="em" style="margin:0 2px 0 2.7px" width="11" height="11" viewBox="0 0 11 11"><path d="M4.5 1 Q5 5 8.5 5.5 Q5 6 4.5 10 Q4 6 0.5 5.5 Q4 5 4.5 1Z" fill="#f7c531"/><path d="M9 0.5 Q9.2 2 10.5 2.2 Q9.2 2.4 9 4 Q8.8 2.4 7.5 2.2 Q8.8 2 9 0.5Z" fill="#f7c531"/></svg>1元直播下標區 <svg class="em" style="margin:0 2px 0 1.2px" width="11" height="10" viewBox="0 0 11 10"><path d="M5.5 2 L9 8 H2Z" fill="#e53935"/></svg>滿100出貨喔!</div>
<div class="icons" style="left:310px;top:821.50px"><svg width="16" height="16" viewBox="0 0 16 16"><rect width="16" height="16" rx="3.2" fill="#2f7cf3"/><path d="M6.2 3.5 H11.5 V10.5" fill="none" stroke="#fff" stroke-width="1.2"/><rect x="4" y="5" width="6" height="7.5" rx=".6" fill="#fff"/></svg><svg width="16" height="16" viewBox="0 0 16 16"><rect width="16" height="16" rx="3.2" fill="#2f7cf3"/><path d="M6.5 3 H10 L12 5 V10.5 H6.5Z" fill="none" stroke="#fff" stroke-width="1.1"/><path d="M4.2 5.5 V12.8 H9.5" fill="none" stroke="#fff" stroke-width="1.1"/></svg><svg width="16" height="16" viewBox="0 0 16 16"><rect width="16" height="16" rx="3.2" fill="#2f7cf3"/><path d="M6.3 5 Q6.3 2.8 8 2.8 Q9.7 2.8 9.7 5" fill="none" stroke="#fff" stroke-width="1"/><path d="M3.8 5 H12.2 L11.6 13 H4.4Z" fill="#fff"/><path d="M9 7.2 Q8 6.7 7.2 7.3 Q6.8 8 8 8.6 Q9.2 9.2 8.8 10 Q8 10.6 6.9 10" fill="none" stroke="#2f7cf3" stroke-width=".7"/></svg><svg width="16" height="16" viewBox="0 0 16 16"><rect width="16" height="16" rx="3.2" fill="#2f7cf3"/><path d="M8 12.5 L3.6 8 Q2.4 6.4 3.6 4.8 Q5.4 3.2 8 5.6 Q10.6 3.2 12.4 4.8 Q13.6 6.4 12.4 8 Z" fill="none" stroke="#fff" stroke-width="1.2" stroke-linejoin="round"/></svg><svg width="16" height="16" viewBox="0 0 16 16"><rect width="16" height="16" rx="3.2" fill="#2f7cf3"/><path d="M4 3.5 H12 L10.5 6" fill="none" stroke="#fff" stroke-width="1"/><path d="M3 8.5 Q6 6 8.5 7.5 L13 10 V12.5 H3Z" fill="#fff"/><path d="M5 11 H11" stroke="#2f7cf3" stroke-width=".7"/></svg></div>
<div class="td" style="left:611.7px;top:812.20px;">--</div>
<div class="td" style="left:725.8px;top:812.20px;">433,866</div>
<div class="td" style="left:819.3px;top:812.20px;">--</div>
<div class="td" style="left:925px;top:812.20px;">nt$433,866</div>
<div class="td" style="left:1018.7px;top:812.20px;">9,827,832</div>
<div class="td" style="left:1125px;top:812.20px;">nt$1</div>
<div class="td" style="left:1218.9px;top:812.20px; font-size:10.4px;letter-spacing:0.25px;">普通店铺</div>
<div class="td" style="left:1306px;top:812.20px; font-size:10.4px;letter-spacing:0.25px;">本土店</div>
<div class="td" style="left:1394px;top:812.20px;">2020-02-07</div>
<div class="abs" style="left:161px;top:845.5px;width:1290px;height:56.5px;background:#f2f7fc;border-top:1px solid #e8edf1"></div>
<div class="cb" style="left:176px;top:867.75px"></div>
<div class="td" style="left:207.5px;top:864.75px">6</div>
<div class="pimg" style="left:267px;top:847.5px"><svg width="35" height="35" viewBox="0 0 35 35"><defs><clipPath id="pc5"><circle cx="17.5" cy="17.5" r="17.5"/></clipPath></defs><g clip-path="url(#pc5)"><rect width="35" height="35" fill="#fafafa"/><rect x="8" y="4" width="8" height="2" fill="#e55"/><rect x="20" y="4" width="8" height="2" fill="#e55"/><rect x="3" y="9" width="8" height="3" fill="#4a8"/><rect x="24" y="9" width="9" height="3" fill="#e33"/><rect x="3" y="15" width="7" height="3" fill="#2a6"/><rect x="25" y="15" width="7" height="3" fill="#36c"/><circle cx="17.5" cy="17" r="5" fill="#f0d0c0"/><path d="M12 16 Q17 8 23 16 L22 13 Q17 9 13 13Z" fill="#222"/><rect x="12" y="24" width="11" height="2" fill="#333"/><rect x="3" y="21" width="7" height="3" fill="#e33"/></g></svg></div>
<div class="pname" style="left:310px;top:846.5px">RUBEE代購 客製化代購 網站代購 日本 美國 歐洲 英國 德國 韓<br>國 澳洲 日拍 AMAZON EBAY 網站代買</div>
<div class="icons" style="left:310px;top:883.00px"><svg width="16" height="16" viewBox="0 0 16 16"><rect width="16" height="16" rx="3.2" fill="#2f7cf3"/><path d="M6.2 3.5 H11.5 V10.5" fill="none" stroke="#fff" stroke-width="1.2"/><rect x="4" y="5" width="6" height="7.5" rx=".6" fill="#fff"/></svg><svg width="16" height="16" viewBox="0 0 16 16"><rect width="16" height="16" rx="3.2" fill="#2f7cf3"/><path d="M6.5 3 H10 L12 5 V10.5 H6.5Z" fill="none" stroke="#fff" stroke-width="1.1"/><path d="M4.2 5.5 V12.8 H9.5" fill="none" stroke="#fff" stroke-width="1.1"/></svg><svg width="16" height="16" viewBox="0 0 16 16"><rect width="16" height="16" rx="3.2" fill="#2f7cf3"/><path d="M6.3 5 Q6.3 2.8 8 2.8 Q9.7 2.8 9.7 5" fill="none" stroke="#fff" stroke-width="1"/><path d="M3.8 5 H12.2 L11.6 13 H4.4Z" fill="#fff"/><path d="M9 7.2 Q8 6.7 7.2 7.3 Q6.8 8 8 8.6 Q9.2 9.2 8.8 10 Q8 10.6 6.9 10" fill="none" stroke="#2f7cf3" stroke-width=".7"/></svg><svg width="16" height="16" viewBox="0 0 16 16"><rect width="16" height="16" rx="3.2" fill="#2f7cf3"/><path d="M8 12.5 L3.6 8 Q2.4 6.4 3.6 4.8 Q5.4 3.2 8 5.6 Q10.6 3.2 12.4 4.8 Q13.6 6.4 12.4 8 Z" fill="none" stroke="#fff" stroke-width="1.2" stroke-linejoin="round"/></svg><svg width="16" height="16" viewBox="0 0 16 16"><rect width="16" height="16" rx="3.2" fill="#2f7cf3"/><path d="M4 3.5 H12 L10.5 6" fill="none" stroke="#fff" stroke-width="1"/><path d="M3 8.5 Q6 6 8.5 7.5 L13 10 V12.5 H3Z" fill="#fff"/><path d="M5 11 H11" stroke="#2f7cf3" stroke-width=".7"/></svg></div>
<div class="td" style="left:611.7px;top:864.45px;">63,430</div>
<div class="td" style="left:725.8px;top:864.45px;">380,580</div>
<div class="td" style="left:819.3px;top:864.45px;">--</div>
<div class="td" style="left:925px;top:864.45px;">nt$380,580</div>
<div class="td" style="left:1018.7px;top:864.45px;">3,228,828</div>
<div class="td" style="left:1125px;top:864.45px;">nt$1</div>
<div class="td" style="left:1218.9px;top:864.45px; font-size:10.4px;letter-spacing:0.25px;">普通店铺</div>
<div class="td" style="left:1306px;top:864.45px; font-size:10.4px;letter-spacing:0.25px;">本土店</div>
<div class="td" style="left:1394px;top:864.45px;">2025-04-09</div>
<div class="abs" style="left:161px;top:902px;width:1290px;height:56.25px;background:#fff;border-top:1px solid #e8edf1"></div>
<div class="cb" style="left:176px;top:924.12px"></div>
<div class="td" style="left:207.5px;top:921.12px">7</div>
<div class="pimg" style="left:267px;top:904px"><svg width="35" height="35" viewBox="0 0 35 35"><defs><clipPath id="pc6"><circle cx="17.5" cy="17.5" r="17.5"/></clipPath></defs><g clip-path="url(#pc6)"><rect width="35" height="35" fill="#e9e7e4"/><rect x="6" y="6" width="2" height="26" fill="#bbb"/><rect x="16" y="6" width="2" height="26" fill="#bbb"/><rect x="6" y="10" width="12" height="2" fill="#cfcfcf"/><rect x="6" y="18" width="12" height="2" fill="#cfcfcf"/><rect x="6" y="26" width="12" height="2" fill="#cfcfcf"/><rect x="21" y="9" width="9" height="3" fill="#9a9a9a"/><rect x="22" y="14" width="6" height="2" fill="#b0b0b0"/><rect x="9" y="22" width="5" height="4" fill="#c9a46a"/></g></svg></div>
<div class="pname" style="left:310px;top:903px">【空間特工】白色角鋼層架【客製專區】專人回覆｜免螺絲角鋼<br>｜廚房置物架｜金屬鐵架｜茶櫃櫥櫃｜電器櫃｜收納架｜組合...</div>
<div class="icons" style="left:310px;top:939.50px"><svg width="16" height="16" viewBox="0 0 16 16"><rect width="16" height="16" rx="3.2" fill="#2f7cf3"/><path d="M6.2 3.5 H11.5 V10.5" fill="none" stroke="#fff" stroke-width="1.2"/><rect x="4" y="5" width="6" height="7.5" rx=".6" fill="#fff"/></svg><svg width="16" height="16" viewBox="0 0 16 16"><rect width="16" height="16" rx="3.2" fill="#2f7cf3"/><path d="M6.5 3 H10 L12 5 V10.5 H6.5Z" fill="none" stroke="#fff" stroke-width="1.1"/><path d="M4.2 5.5 V12.8 H9.5" fill="none" stroke="#fff" stroke-width="1.1"/></svg><svg width="16" height="16" viewBox="0 0 16 16"><rect width="16" height="16" rx="3.2" fill="#2f7cf3"/><path d="M6.3 5 Q6.3 2.8 8 2.8 Q9.7 2.8 9.7 5" fill="none" stroke="#fff" stroke-width="1"/><path d="M3.8 5 H12.2 L11.6 13 H4.4Z" fill="#fff"/><path d="M9 7.2 Q8 6.7 7.2 7.3 Q6.8 8 8 8.6 Q9.2 9.2 8.8 10 Q8 10.6 6.9 10" fill="none" stroke="#2f7cf3" stroke-width=".7"/></svg><svg width="16" height="16" viewBox="0 0 16 16"><rect width="16" height="16" rx="3.2" fill="#2f7cf3"/><path d="M8 12.5 L3.6 8 Q2.4 6.4 3.6 4.8 Q5.4 3.2 8 5.6 Q10.6 3.2 12.4 4.8 Q13.6 6.4 12.4 8 Z" fill="none" stroke="#fff" stroke-width="1.2" stroke-linejoin="round"/></svg><svg width="16" height="16" viewBox="0 0 16 16"><rect width="16" height="16" rx="3.2" fill="#2f7cf3"/><path d="M4 3.5 H12 L10.5 6" fill="none" stroke="#fff" stroke-width="1"/><path d="M3 8.5 Q6 6 8.5 7.5 L13 10 V12.5 H3Z" fill="#fff"/><path d="M5 11 H11" stroke="#2f7cf3" stroke-width=".7"/></svg></div>
<div class="td" style="left:611.7px;top:920.83px;">--</div>
<div class="td" style="left:725.8px;top:920.83px;">335,957</div>
<div class="td" style="left:819.3px;top:920.83px;">--</div>
<div class="td" style="left:925px;top:920.83px;">nt$335,957</div>
<div class="td" style="left:1018.7px;top:920.83px;">14,093,040</div>
<div class="td" style="left:1125px;top:920.83px;">nt$1</div>
<div class="td" style="left:1218.9px;top:920.83px; font-size:10.4px;letter-spacing:0.25px;">旗舰店铺</div>
<div class="td" style="left:1306px;top:920.83px; font-size:10.4px;letter-spacing:0.25px;">本土店</div>
<div class="td" style="left:1394px;top:920.83px;">2019-03-07</div>
<div class="abs" style="left:161px;top:958.25px;width:1290px;height:57.25px;background:#f2f7fc;border-top:1px solid #e8edf1"></div>
<div class="cb" style="left:176px;top:980.88px"></div>
<div class="td" style="left:207.5px;top:977.88px">8</div>
<div class="pimg" style="left:267px;top:960.25px"><svg width="35" height="35" viewBox="0 0 35 35"><defs><clipPath id="pc7"><circle cx="17.5" cy="17.5" r="17.5"/></clipPath></defs><g clip-path="url(#pc7)"><rect width="35" height="35" fill="#2a2d33"/><rect x="0" y="12" width="35" height="12" fill="#2f6fd8"/><rect x="3" y="14" width="12" height="4" fill="#fff"/><rect x="18" y="19" width="13" height="4" fill="#fff"/><rect x="5" y="7" width="25" height="3" fill="#bbb"/><rect x="4" y="26" width="27" height="2" fill="#777"/></g></svg></div>
<div class="pname" style="left:310px;top:959.25px">Chane代購 客製化代購 各大平台代購 網址代購 海外代購 各大平<br>台都可貨到付款 詳情請諮詢客服 24小時客服在線回復</div>
<div class="icons" style="left:310px;top:995.75px"><svg width="16" height="16" viewBox="0 0 16 16"><rect width="16" height="16" rx="3.2" fill="#2f7cf3"/><path d="M6.2 3.5 H11.5 V10.5" fill="none" stroke="#fff" stroke-width="1.2"/><rect x="4" y="5" width="6" height="7.5" rx=".6" fill="#fff"/></svg><svg width="16" height="16" viewBox="0 0 16 16"><rect width="16" height="16" rx="3.2" fill="#2f7cf3"/><path d="M6.5 3 H10 L12 5 V10.5 H6.5Z" fill="none" stroke="#fff" stroke-width="1.1"/><path d="M4.2 5.5 V12.8 H9.5" fill="none" stroke="#fff" stroke-width="1.1"/></svg><svg width="16" height="16" viewBox="0 0 16 16"><rect width="16" height="16" rx="3.2" fill="#2f7cf3"/><path d="M6.3 5 Q6.3 2.8 8 2.8 Q9.7 2.8 9.7 5" fill="none" stroke="#fff" stroke-width="1"/><path d="M3.8 5 H12.2 L11.6 13 H4.4Z" fill="#fff"/><path d="M9 7.2 Q8 6.7 7.2 7.3 Q6.8 8 8 8.6 Q9.2 9.2 8.8 10 Q8 10.6 6.9 10" fill="none" stroke="#2f7cf3" stroke-width=".7"/></svg><svg width="16" height="16" viewBox="0 0 16 16"><rect width="16" height="16" rx="3.2" fill="#2f7cf3"/><path d="M8 12.5 L3.6 8 Q2.4 6.4 3.6 4.8 Q5.4 3.2 8 5.6 Q10.6 3.2 12.4 4.8 Q13.6 6.4 12.4 8 Z" fill="none" stroke="#fff" stroke-width="1.2" stroke-linejoin="round"/></svg><svg width="16" height="16" viewBox="0 0 16 16"><rect width="16" height="16" rx="3.2" fill="#2f7cf3"/><path d="M4 3.5 H12 L10.5 6" fill="none" stroke="#fff" stroke-width="1"/><path d="M3 8.5 Q6 6 8.5 7.5 L13 10 V12.5 H3Z" fill="#fff"/><path d="M5 11 H11" stroke="#2f7cf3" stroke-width=".7"/></svg></div>
<div class="td" style="left:611.7px;top:977.58px;">65,184</div>
<div class="td" style="left:725.8px;top:977.58px;">325,916</div>
<div class="td" style="left:819.3px;top:977.58px;"><svg width="6" height="11" viewBox="0 0 6 11" style="vertical-align:-1px;margin-right:3px"><path d="M3 10.5 V1.2 M0.6 3.6 L3 1 L5.4 3.6" fill="none" stroke="#e0283a" stroke-width="1.1"/></svg>2.58%</div>
<div class="td" style="left:925px;top:977.58px;">nt$325,916</div>
<div class="td" style="left:1018.7px;top:977.58px;">6,703,720</div>
<div class="td" style="left:1125px;top:977.58px;">nt$1</div>
<div class="td" style="left:1218.9px;top:977.58px; font-size:10.4px;letter-spacing:0.25px;">普通店铺</div>
<div class="td" style="left:1306px;top:977.58px; font-size:10.4px;letter-spacing:0.25px;">本土店</div>
<div class="td" style="left:1394px;top:977.58px;">2024-03-02</div>
<div class="abs" style="left:161px;top:1015.5px;width:1290px;height:55.25px;background:#fff;border-top:1px solid #e8edf1"></div>
<div class="cb" style="left:176px;top:1037.12px"></div>
<div class="td" style="left:207.5px;top:1034.12px">9</div>
<div class="pimg" style="left:267px;top:1017.5px"><svg width="35" height="35" viewBox="0 0 35 35"><defs><clipPath id="pc8"><circle cx="17.5" cy="17.5" r="17.5"/></clipPath></defs><g clip-path="url(#pc8)"><rect width="35" height="35" fill="#fdfbfc"/><rect x="8" y="3" width="14" height="3" fill="#e84fa0"/><rect x="4" y="9" width="18" height="2" fill="#555"/><rect x="23" y="12" width="9" height="10" fill="#d3358a"/><circle cx="11" cy="22" r="7" fill="#f7e03a"/><circle cx="15" cy="24" r="5" fill="#e94d98"/><circle cx="8" cy="26" r="3" fill="#2c8ad8"/></g></svg></div>
<div class="pname" style="left:310px;top:1016.5px"><svg class="em" style="margin:0 2.5px 0 2.5px" width="11" height="11" viewBox="0 0 11 11"><text x="0.3" y="8.5" font-family="Liberation Sans" font-size="8" font-style="italic" font-weight="bold" fill="#e8344e" textLength="10.4" lengthAdjust="spacingAndGlyphs">100</text><path d="M0.5 10.2 Q6 8.8 11 10.2" fill="none" stroke="#e8344e" stroke-width=".9"/></svg>無限制設計<svg class="em" style="margin:0 2.5px 0 2.5px" width="11" height="11" viewBox="0 0 11 11"><text x="0.3" y="8.5" font-family="Liberation Sans" font-size="8" font-style="italic" font-weight="bold" fill="#e8344e" textLength="10.4" lengthAdjust="spacingAndGlyphs">100</text><path d="M0.5 10.2 Q6 8.8 11 10.2" fill="none" stroke="#e8344e" stroke-width=".9"/></svg>名片設計 平面設計 名片訂製 客製名製 燙金名<br>片 個人名片 店卡 小卡 售後卡 感謝卡 代客設計 業務名片</div>
<div class="icons" style="left:310px;top:1053.00px"><svg width="16" height="16" viewBox="0 0 16 16"><rect width="16" height="16" rx="3.2" fill="#2f7cf3"/><path d="M6.2 3.5 H11.5 V10.5" fill="none" stroke="#fff" stroke-width="1.2"/><rect x="4" y="5" width="6" height="7.5" rx=".6" fill="#fff"/></svg><svg width="16" height="16" viewBox="0 0 16 16"><rect width="16" height="16" rx="3.2" fill="#2f7cf3"/><path d="M6.5 3 H10 L12 5 V10.5 H6.5Z" fill="none" stroke="#fff" stroke-width="1.1"/><path d="M4.2 5.5 V12.8 H9.5" fill="none" stroke="#fff" stroke-width="1.1"/></svg><svg width="16" height="16" viewBox="0 0 16 16"><rect width="16" height="16" rx="3.2" fill="#2f7cf3"/><path d="M6.3 5 Q6.3 2.8 8 2.8 Q9.7 2.8 9.7 5" fill="none" stroke="#fff" stroke-width="1"/><path d="M3.8 5 H12.2 L11.6 13 H4.4Z" fill="#fff"/><path d="M9 7.2 Q8 6.7 7.2 7.3 Q6.8 8 8 8.6 Q9.2 9.2 8.8 10 Q8 10.6 6.9 10" fill="none" stroke="#2f7cf3" stroke-width=".7"/></svg><svg width="16" height="16" viewBox="0 0 16 16"><rect width="16" height="16" rx="3.2" fill="#2f7cf3"/><path d="M8 12.5 L3.6 8 Q2.4 6.4 3.6 4.8 Q5.4 3.2 8 5.6 Q10.6 3.2 12.4 4.8 Q13.6 6.4 12.4 8 Z" fill="none" stroke="#fff" stroke-width="1.2" stroke-linejoin="round"/></svg><svg width="16" height="16" viewBox="0 0 16 16"><rect width="16" height="16" rx="3.2" fill="#2f7cf3"/><path d="M4 3.5 H12 L10.5 6" fill="none" stroke="#fff" stroke-width="1"/><path d="M3 8.5 Q6 6 8.5 7.5 L13 10 V12.5 H3Z" fill="#fff"/><path d="M5 11 H11" stroke="#2f7cf3" stroke-width=".7"/></svg></div>
<div class="td" style="left:611.7px;top:1033.83px;">57,918</div>
<div class="td" style="left:725.8px;top:1033.83px;">289,590</div>
<div class="td" style="left:819.3px;top:1033.83px;"><svg width="6" height="11" viewBox="0 0 6 11" style="vertical-align:-1px;margin-right:3px"><path d="M3 10.5 V1.2 M0.6 3.6 L3 1 L5.4 3.6" fill="none" stroke="#e0283a" stroke-width="1.1"/></svg>6.34%</div>
<div class="td" style="left:925px;top:1033.83px;">nt$289,590</div>
<div class="td" style="left:1018.7px;top:1033.83px;">4,355,667</div>
<div class="td" style="left:1125px;top:1033.83px;">nt$1</div>
<div class="td" style="left:1218.9px;top:1033.83px; font-size:10.4px;letter-spacing:0.25px;">普通店铺</div>
<div class="td" style="left:1306px;top:1033.83px; font-size:10.4px;letter-spacing:0.25px;">本土店</div>
<div class="td" style="left:1394px;top:1033.83px;">2024-05-20</div>
<div class="abs" style="left:161px;top:1070.75px;width:1290px;height:57.25px;background:#f2f7fc;border-top:1px solid #e8edf1"></div>
<div class="cb" style="left:176px;top:1093.38px"></div>
<div class="td" style="left:207.5px;top:1090.38px">10</div>
<div class="pimg" style="left:267px;top:1072.75px"><svg width="35" height="35" viewBox="0 0 35 35"><defs><clipPath id="pc9"><circle cx="17.5" cy="17.5" r="17.5"/></clipPath></defs><g clip-path="url(#pc9)"><rect width="35" height="35" fill="#fdfdfd"/><text x="5" y="11" font-size="8" font-weight="bold" fill="#c81e1e" font-family="Liberation Sans">小丸子</text><text x="9" y="21" font-size="8" font-weight="bold" fill="#222" font-family="Liberation Sans">代購</text><rect x="9" y="23" width="20" height="8" fill="#e02a2a"/><rect x="3" y="14" width="4" height="12" fill="#f0b0b0"/><circle cx="29" cy="22" r="3" fill="#e05030"/></g></svg></div>
<div class="pname" style="left:310px;top:1071.75px">小丸子代購 客製化代購 超商取貨付款 各大平台都可貨到付款 詳<br>情請諮詢客服#</div>
<div class="icons" style="left:310px;top:1108.25px"><svg width="16" height="16" viewBox="0 0 16 16"><rect width="16" height="16" rx="3.2" fill="#2f7cf3"/><path d="M6.2 3.5 H11.5 V10.5" fill="none" stroke="#fff" stroke-width="1.2"/><rect x="4" y="5" width="6" height="7.5" rx=".6" fill="#fff"/></svg><svg width="16" height="16" viewBox="0 0 16 16"><rect width="16" height="16" rx="3.2" fill="#2f7cf3"/><path d="M6.5 3 H10 L12 5 V10.5 H6.5Z" fill="none" stroke="#fff" stroke-width="1.1"/><path d="M4.2 5.5 V12.8 H9.5" fill="none" stroke="#fff" stroke-width="1.1"/></svg><svg width="16" height="16" viewBox="0 0 16 16"><rect width="16" height="16" rx="3.2" fill="#2f7cf3"/><path d="M6.3 5 Q6.3 2.8 8 2.8 Q9.7 2.8 9.7 5" fill="none" stroke="#fff" stroke-width="1"/><path d="M3.8 5 H12.2 L11.6 13 H4.4Z" fill="#fff"/><path d="M9 7.2 Q8 6.7 7.2 7.3 Q6.8 8 8 8.6 Q9.2 9.2 8.8 10 Q8 10.6 6.9 10" fill="none" stroke="#2f7cf3" stroke-width=".7"/></svg><svg width="16" height="16" viewBox="0 0 16 16"><rect width="16" height="16" rx="3.2" fill="#2f7cf3"/><path d="M8 12.5 L3.6 8 Q2.4 6.4 3.6 4.8 Q5.4 3.2 8 5.6 Q10.6 3.2 12.4 4.8 Q13.6 6.4 12.4 8 Z" fill="none" stroke="#fff" stroke-width="1.2" stroke-linejoin="round"/></svg><svg width="16" height="16" viewBox="0 0 16 16"><rect width="16" height="16" rx="3.2" fill="#2f7cf3"/><path d="M4 3.5 H12 L10.5 6" fill="none" stroke="#fff" stroke-width="1"/><path d="M3 8.5 Q6 6 8.5 7.5 L13 10 V12.5 H3Z" fill="#fff"/><path d="M5 11 H11" stroke="#2f7cf3" stroke-width=".7"/></svg></div>
<div class="td" style="left:611.7px;top:1090.08px;">43,720</div>
<div class="td" style="left:725.8px;top:1090.08px;">262,320</div>
<div class="td" style="left:819.3px;top:1090.08px;"><svg width="6" height="11" viewBox="0 0 6 11" style="vertical-align:-1px;margin-right:3px"><path d="M3 10.5 V1.2 M0.6 3.6 L3 1 L5.4 3.6" fill="none" stroke="#e0283a" stroke-width="1.1"/></svg>16.99%</div>
<div class="td" style="left:925px;top:1090.08px;">nt$262,320</div>
<div class="td" style="left:1018.7px;top:1090.08px;">2,355,742</div>
<div class="td" style="left:1125px;top:1090.08px;">nt$1</div>
<div class="td" style="left:1218.9px;top:1090.08px; font-size:10.4px;letter-spacing:0.25px;">普通店铺</div>
<div class="td" style="left:1306px;top:1090.08px; font-size:10.4px;letter-spacing:0.25px;">本土店</div>
<div class="td" style="left:1394px;top:1090.08px;">2023-11-20</div>
<div class="abs" style="left:161px;top:1128px;width:1290px;height:57px;background:#fff;border-top:1px solid #e8edf1"></div>
<div class="cb" style="left:176px;top:1150.50px"></div>
<div class="td" style="left:207.5px;top:1147.50px">11</div>
<div class="pimg" style="left:267px;top:1130px"><svg width="35" height="35" viewBox="0 0 35 35"><defs><clipPath id="pc10"><circle cx="17.5" cy="17.5" r="17.5"/></clipPath></defs><g clip-path="url(#pc10)"><rect width="35" height="35" fill="#e7e2df"/><rect x="0" y="0" width="35" height="6" fill="#7fc3c6"/><rect x="6" y="8" width="11" height="24" fill="#f6f6f6"/><rect x="19" y="10" width="11" height="20" fill="#d8d8d8"/><rect x="8" y="13" width="7" height="2" fill="#999"/><rect x="21" y="15" width="7" height="2" fill="#888"/><rect x="8" y="20" width="7" height="6" fill="#b9b0a8"/><rect x="0" y="31" width="35" height="4" fill="#d9a3a0"/></g></svg></div>
<div class="pname" style="left:310px;top:1129px"><svg class="em" style="margin:0 1.5px 0 2px" width="11" height="12" viewBox="0 0 11 12"><rect x="1" y="4" width="9" height="7.5" fill="#f4a51c"/><rect x="0.5" y="3" width="10" height="2.5" fill="#f7b733"/><rect x="4.5" y="3" width="2" height="8.5" fill="#e53935"/><path d="M5.5 3 Q3 0 2 2 Q2 3 5.5 3 Q8 0 9 2 Q9 3 5.5 3" fill="#e53935"/></svg>客製化賣場<svg class="em" style="margin:0 1.5px 0 2px" width="11" height="12" viewBox="0 0 11 12"><rect x="1" y="4" width="9" height="7.5" fill="#f4a51c"/><rect x="0.5" y="3" width="10" height="2.5" fill="#f7b733"/><rect x="4.5" y="3" width="2" height="8.5" fill="#e53935"/><path d="M5.5 3 Q3 0 2 2 Q2 3 5.5 3 Q8 0 9 2 Q9 3 5.5 3" fill="#e53935"/></svg> 洞洞板 電箱洞洞板 洞洞板置物架 壁掛置物架<br>木質洞洞板 電箱裝飾 免釘置物架 牆壁置物架 牆上置物架</div>
<div class="icons" style="left:310px;top:1165.50px"><svg width="16" height="16" viewBox="0 0 16 16"><rect width="16" height="16" rx="3.2" fill="#2f7cf3"/><path d="M6.2 3.5 H11.5 V10.5" fill="none" stroke="#fff" stroke-width="1.2"/><rect x="4" y="5" width="6" height="7.5" rx=".6" fill="#fff"/></svg><svg width="16" height="16" viewBox="0 0 16 16"><rect width="16" height="16" rx="3.2" fill="#2f7cf3"/><path d="M6.5 3 H10 L12 5 V10.5 H6.5Z" fill="none" stroke="#fff" stroke-width="1.1"/><path d="M4.2 5.5 V12.8 H9.5" fill="none" stroke="#fff" stroke-width="1.1"/></svg><svg width="16" height="16" viewBox="0 0 16 16"><rect width="16" height="16" rx="3.2" fill="#2f7cf3"/><path d="M6.3 5 Q6.3 2.8 8 2.8 Q9.7 2.8 9.7 5" fill="none" stroke="#fff" stroke-width="1"/><path d="M3.8 5 H12.2 L11.6 13 H4.4Z" fill="#fff"/><path d="M9 7.2 Q8 6.7 7.2 7.3 Q6.8 8 8 8.6 Q9.2 9.2 8.8 10 Q8 10.6 6.9 10" fill="none" stroke="#2f7cf3" stroke-width=".7"/></svg><svg width="16" height="16" viewBox="0 0 16 16"><rect width="16" height="16" rx="3.2" fill="#2f7cf3"/><path d="M8 12.5 L3.6 8 Q2.4 6.4 3.6 4.8 Q5.4 3.2 8 5.6 Q10.6 3.2 12.4 4.8 Q13.6 6.4 12.4 8 Z" fill="none" stroke="#fff" stroke-width="1.2" stroke-linejoin="round"/></svg><svg width="16" height="16" viewBox="0 0 16 16"><rect width="16" height="16" rx="3.2" fill="#2f7cf3"/><path d="M4 3.5 H12 L10.5 6" fill="none" stroke="#fff" stroke-width="1"/><path d="M3 8.5 Q6 6 8.5 7.5 L13 10 V12.5 H3Z" fill="#fff"/><path d="M5 11 H11" stroke="#2f7cf3" stroke-width=".7"/></svg></div>
<div class="td" style="left:611.7px;top:1147.20px;">--</div>
<div class="td" style="left:725.8px;top:1147.20px;">241,747</div>
<div class="td" style="left:819.3px;top:1147.20px;">--</div>
<div class="td" style="left:925px;top:1147.20px;">nt$241,747</div>
<div class="td" style="left:1018.7px;top:1147.20px;">4,349,375</div>
<div class="td" style="left:1125px;top:1147.20px;">nt$1</div>
<div class="td" style="left:1218.9px;top:1147.20px; font-size:10.4px;letter-spacing:0.25px;">普通店铺</div>
<div class="td" style="left:1306px;top:1147.20px; font-size:10.4px;letter-spacing:0.25px;">本土店</div>
<div class="td" style="left:1394px;top:1147.20px;">2023-08-24</div>
<div class="abs" style="left:1451px;top:553.5px;width:9px;height:640px;background:#fff"></div>
<div class="abs" style="left:1450px;top:553.5px;width:1px;height:640px;background:#e6e9ee"></div>
<div class="abs" style="left:1460px;top:67px;width:12px;height:1100px;background:#f3f3f3"></div>
<div class="abs" style="left:1468px;top:67px;width:3px;height:703px;background:#2f7cf3"></div>
<div class="abs" style="left:1425px;top:764px;width:34px;height:34px;border-radius:50%;background:#fff;box-shadow:0 1px 4px rgba(0,0,0,.15);display:flex;align-items:center;justify-content:center"><svg width="18" height="18" viewBox="0 0 18 18"><circle cx="8.5" cy="9.5" r="6.5" fill="none" stroke="#5bbde0" stroke-width="1.6" stroke-dasharray="2.5 1.3"/><path d="M3.5 5.8 A6.5 6.5 0 0 1 11.5 3.6" fill="none" stroke="#23456f" stroke-width="1.7" stroke-dasharray="2.5 1.3"/><path d="M5.3 8.8 L8.2 11.8 L16 3.4" fill="none" stroke="#23456f" stroke-width="1.7"/></svg></div>
</div>
<div id="frameborder"></div>
</body></html>
